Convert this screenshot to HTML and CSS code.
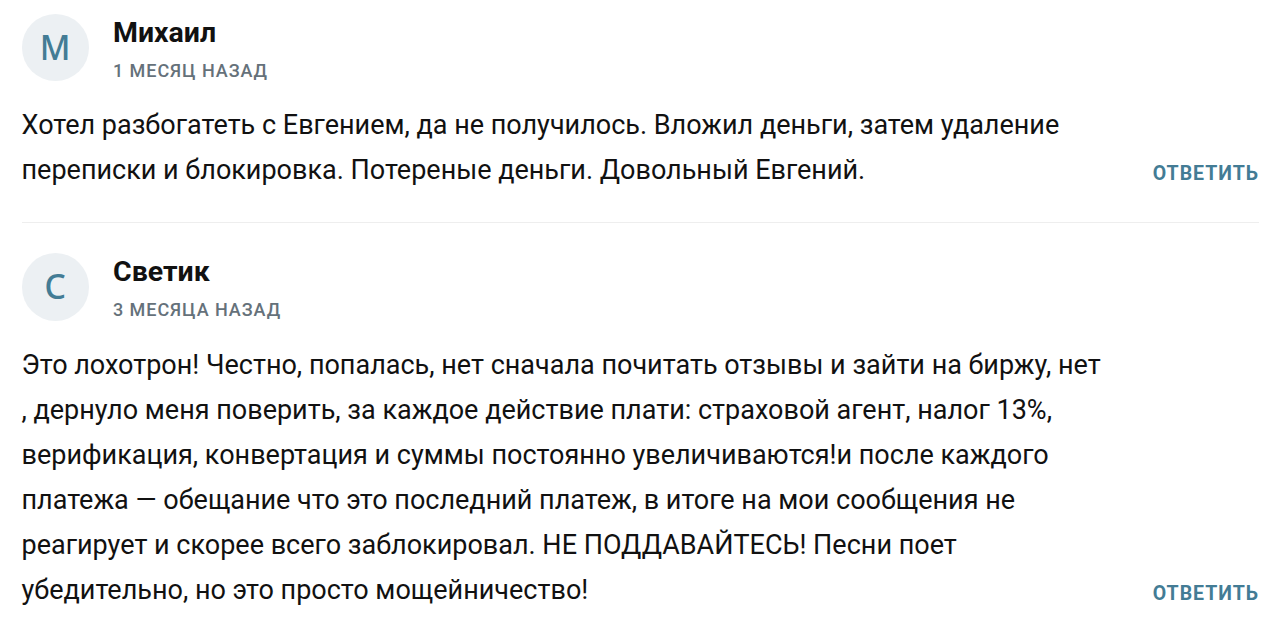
FILE: index.html
```html
<!DOCTYPE html>
<html lang="ru">
<head>
    <meta charset="UTF-8">
    <meta name="viewport" content="width=device-width, initial-scale=1.0">
    <title>Отзывы</title>
    <link rel="stylesheet" href="styles.css">
</head>
<body>
    <div class="comments">
        <div class="comment">
            <div class="comment-header">
                <div class="avatar">М</div>
                <div class="comment-info">
                    <div class="comment-author">Михаил</div>
                    <div class="comment-date">1 месяц назад</div>
                </div>
            </div>
            <div class="comment-body">
                <p class="comment-text">Хотел разбогатеть с Евгением, да не получилось. Вложил деньги, затем удаление переписки и блокировка. Потереные деньги. Довольный Евгений.</p>
                <a class="reply" href="#">Ответить</a>
            </div>
        </div>

        <div class="comment">
            <div class="comment-header">
                <div class="avatar">С</div>
                <div class="comment-info">
                    <div class="comment-author">Светик</div>
                    <div class="comment-date">3 месяца назад</div>
                </div>
            </div>
            <div class="comment-body">
                <p class="comment-text">Это лохотрон! Честно, попалась, нет сначала почитать отзывы и зайти на биржу, нет<br>, дернуло меня поверить, за каждое действие плати: страховой агент, налог 13%, верификация, конвертация и суммы постоянно увеличиваются!и после каждого платежа — обещание что это последний платеж, в итоге на мои сообщения не реагирует и скорее всего заблокировал. НЕ ПОДДАВАЙТЕСЬ! Песни поет убедительно, но это просто мощейничество!</p>
                <a class="reply" href="#">Ответить</a>
            </div>
        </div>
    </div>
</body>
</html>
```
FILE: styles.css
```css
body {
    margin: 0;
    background: #fff;
    color: #111;
    font-family: Roboto, sans-serif;
}

.comments {
    padding: 0 19px 0 21.5px;
}

.comment {
    padding: 14px 0 29px;
    border-bottom: 1px solid #eee;
}

.comment + .comment {
    padding: 30px 0 0;
    border-bottom: none;
}

.comment-header {
    display: flex;
    gap: 24px;
    height: 67px;
}

.comment + .comment .comment-header {
    height: 68px;
}

.avatar {
    width: 67.5px;
    border-radius: 50%;
    background: #ecf0f3;
    color: #437c95;
    font-family: "Noto Sans", sans-serif;
    font-size: 33.5px;
    font-weight: 500;
    line-height: 67px;
    text-align: center;
}

.comment-author {
    padding-top: 1px;
    font-size: 28.5px;
    font-weight: 700;
    line-height: 36px;
}

.comment-date {
    margin-top: 7px;
    color: #65717a;
    font-size: 18px;
    font-weight: 500;
    line-height: 26px;
    letter-spacing: 0.95px;
    text-transform: uppercase;
}

.comment-body {
    display: flex;
    justify-content: space-between;
    align-items: flex-end;
    margin-top: 22px;
}

.comment-text {
    width: 1095px;
    margin: 0;
    font-size: 27px;
    line-height: 45px;
}

.reply {
    color: #437c95;
    font-size: 19.5px;
    font-weight: 700;
    line-height: 38px;
    letter-spacing: 0.98px;
    text-decoration: none;
    text-transform: uppercase;
}
```
